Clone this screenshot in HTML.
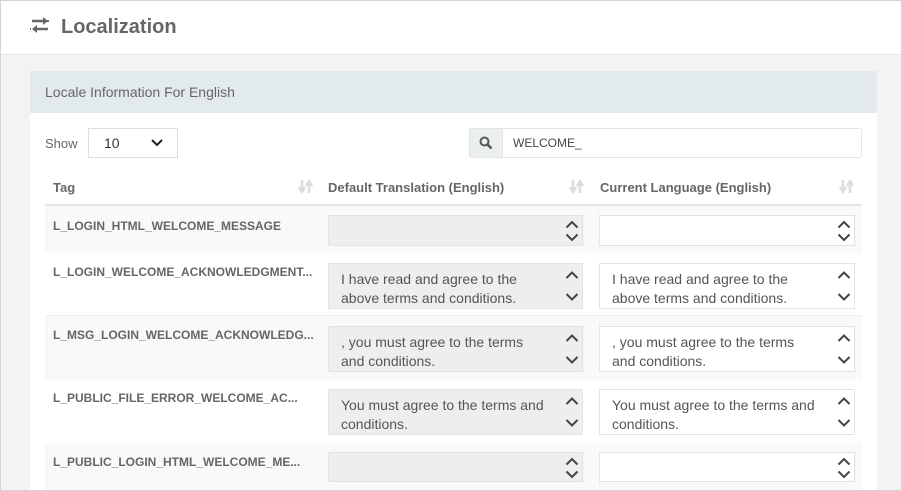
<!DOCTYPE html>
<html><head><style>
*{box-sizing:border-box;margin:0;padding:0}
body{width:902px;height:491px;overflow:hidden;background:#f3f3f3;font-family:"Liberation Sans",Arial,sans-serif;color:#555;position:relative}
.a{position:absolute}
.frame{left:0;top:0;width:902px;height:491px;border:1px solid #d4d4d4;z-index:10;pointer-events:none}
.top{left:0;top:0;width:902px;height:55px;background:#fff;border-bottom:1px solid #e6e6e6}
.title{left:61px;top:16px;font-size:20px;font-weight:bold;color:#666}
.panel{left:30px;top:71px;width:847px;height:420px;background:#fff}
.ph{left:30px;top:71px;width:847px;height:42px;background:#e3eaec;font-size:14px;color:#666;padding:13px 0 0 15px}
.th{font-size:13px;font-weight:bold;color:#666;top:180px}
.sort{top:179px}
.row{left:45px;width:817px}
.st{background:repeating-linear-gradient(90deg,#f6f6f6 0 1px,#fcfcfc 1px 2px)}
.tag{left:53px;font-size:12px;font-weight:bold;color:#666}
.ta{border:1px solid #dde5e8;font-size:14px;color:#555;padding:6px 36px 0 12px;line-height:19px;overflow:hidden}
.g{background:#eee;left:328px;width:255px}
.w{background:#fff;left:599px;width:256px}
.arr{position:absolute;right:3px;top:2px;width:14px}
</style></head><body>
<div class="a top"></div>
<svg class="a" style="left:30px;top:17px" width="20" height="16" viewBox="0 0 20 16"><path d="M2 4h12" stroke="#666" stroke-width="2.5"/><path d="M13 0l5 4-5 4z" fill="#666"/><path d="M17 4h2" stroke="#666" stroke-width="2"/><path d="M6 12h12" stroke="#666" stroke-width="2.5"/><path d="M7 8l-5 4 5 4z" fill="#666"/><path d="M0 12h1" stroke="#666" stroke-width="2"/></svg>
<div class="a title">Localization</div>
<div class="a panel"></div>
<div class="a ph">Locale Information For English</div>
<div class="a" style="left:45px;top:136px;font-size:13px;color:#666">Show</div>
<div class="a" style="left:88px;top:128px;width:90px;height:30px;border:1px solid #ddd;font-size:14px;padding:6px 0 0 15px;color:#333">10
<svg class="a" style="left:62px;top:10px" width="12" height="8" viewBox="0 0 12 8"><path d="M1 1l5 5 5-5" stroke="#222" stroke-width="2" fill="none"/></svg></div>
<div class="a" style="left:469px;top:128px;width:393px;height:30px;border:1px solid #e0e6e8;border-radius:3px;background:#fff"></div>
<div class="a" style="left:469px;top:128px;width:34px;height:30px;background:#eceff0;border:1px solid #e0e6e8;border-radius:3px 0 0 3px"></div>
<svg class="a" style="left:479px;top:136px" width="14" height="14" viewBox="0 0 14 14"><circle cx="5.5" cy="5.5" r="4" stroke="#555" stroke-width="2" fill="none"/><path d="M8.5 8.5l4 4" stroke="#555" stroke-width="2.5"/></svg>
<div class="a" style="left:513px;top:136px;font-size:12px;color:#444">WELCOME_</div>
<div class="a th" style="left:53px">Tag</div>
<div class="a th" style="left:328px">Default Translation (English)</div>
<div class="a th" style="left:600px">Current Language (English)</div>
<svg class="a sort" style="left:298px" width="15" height="15" viewBox="0 0 15 15"><path d="M4 1v10M1 8l3 5 3-5M11 14V4M8 7l3-5 3 5" stroke="#ddd" stroke-width="2.5" fill="none"/></svg>
<svg class="a sort" style="left:569px" width="15" height="15" viewBox="0 0 15 15"><path d="M4 1v10M1 8l3 5 3-5M11 14V4M8 7l3-5 3 5" stroke="#ddd" stroke-width="2.5" fill="none"/></svg>
<svg class="a sort" style="left:839px" width="15" height="15" viewBox="0 0 15 15"><path d="M4 1v10M1 8l3 5 3-5M11 14V4M8 7l3-5 3 5" stroke="#ddd" stroke-width="2.5" fill="none"/></svg>
<div class="a" style="left:45px;top:204px;width:817px;height:2px;background:#e3e3e3"></div>

<div class="a row st" style="top:206px;height:47px"></div>
<div class="a row" style="top:315px;height:1px;background:#eee"></div>
<div class="a row st" style="top:316px;height:64px"></div>
<div class="a row st" style="top:443px;height:48px"></div>

<div class="a tag" style="top:219px">L_LOGIN_HTML_WELCOME_MESSAGE</div>
<div class="a tag" style="top:265px">L_LOGIN_WELCOME_ACKNOWLEDGMENT...</div>
<div class="a tag" style="top:328px">L_MSG_LOGIN_WELCOME_ACKNOWLEDG...</div>
<div class="a tag" style="top:391px">L_PUBLIC_FILE_ERROR_WELCOME_AC...</div>
<div class="a tag" style="top:455px">L_PUBLIC_LOGIN_HTML_WELCOME_ME...</div>

<div class="a ta g" style="top:215px;height:31px"><svg class="arr" height="26" viewBox="0 0 14 26"><path d="M1.5 9.5l5.5-5.5 5.5 5.5M1.5 16.5l5.5 5.5 5.5-5.5" stroke="#444" stroke-width="2" fill="none"/></svg></div>
<div class="a ta w" style="top:215px;height:31px"><svg class="arr" height="26" viewBox="0 0 14 26"><path d="M1.5 9.5l5.5-5.5 5.5 5.5M1.5 16.5l5.5 5.5 5.5-5.5" stroke="#444" stroke-width="2" fill="none"/></svg></div>
<div class="a ta g" style="top:263px;height:46px">I have read and agree to the above terms and conditions.<svg class="arr" height="40" viewBox="0 0 14 40"><path d="M1.5 12l5.5-5.5 5.5 5.5M1.5 28l5.5 5.5 5.5-5.5" stroke="#444" stroke-width="2" fill="none"/></svg></div>
<div class="a ta w" style="top:263px;height:46px">I have read and agree to the above terms and conditions.<svg class="arr" height="40" viewBox="0 0 14 40"><path d="M1.5 12l5.5-5.5 5.5 5.5M1.5 28l5.5 5.5 5.5-5.5" stroke="#444" stroke-width="2" fill="none"/></svg></div>
<div class="a ta g" style="top:326px;height:46px">, you must agree to the terms<br>and conditions.<svg class="arr" height="40" viewBox="0 0 14 40"><path d="M1.5 12l5.5-5.5 5.5 5.5M1.5 28l5.5 5.5 5.5-5.5" stroke="#444" stroke-width="2" fill="none"/></svg></div>
<div class="a ta w" style="top:326px;height:46px">, you must agree to the terms<br>and conditions.<svg class="arr" height="40" viewBox="0 0 14 40"><path d="M1.5 12l5.5-5.5 5.5 5.5M1.5 28l5.5 5.5 5.5-5.5" stroke="#444" stroke-width="2" fill="none"/></svg></div>
<div class="a ta g" style="top:389px;height:46px">You must agree to the terms and conditions.<svg class="arr" height="40" viewBox="0 0 14 40"><path d="M1.5 12l5.5-5.5 5.5 5.5M1.5 28l5.5 5.5 5.5-5.5" stroke="#444" stroke-width="2" fill="none"/></svg></div>
<div class="a ta w" style="top:389px;height:46px">You must agree to the terms and conditions.<svg class="arr" height="40" viewBox="0 0 14 40"><path d="M1.5 12l5.5-5.5 5.5 5.5M1.5 28l5.5 5.5 5.5-5.5" stroke="#444" stroke-width="2" fill="none"/></svg></div>
<div class="a ta g" style="top:452px;height:30px"><svg class="arr" height="26" viewBox="0 0 14 26"><path d="M1.5 9.5l5.5-5.5 5.5 5.5M1.5 16.5l5.5 5.5 5.5-5.5" stroke="#444" stroke-width="2" fill="none"/></svg></div>
<div class="a ta w" style="top:452px;height:30px"><svg class="arr" height="26" viewBox="0 0 14 26"><path d="M1.5 9.5l5.5-5.5 5.5 5.5M1.5 16.5l5.5 5.5 5.5-5.5" stroke="#444" stroke-width="2" fill="none"/></svg></div>
<div class="a frame"></div>
</body></html>
